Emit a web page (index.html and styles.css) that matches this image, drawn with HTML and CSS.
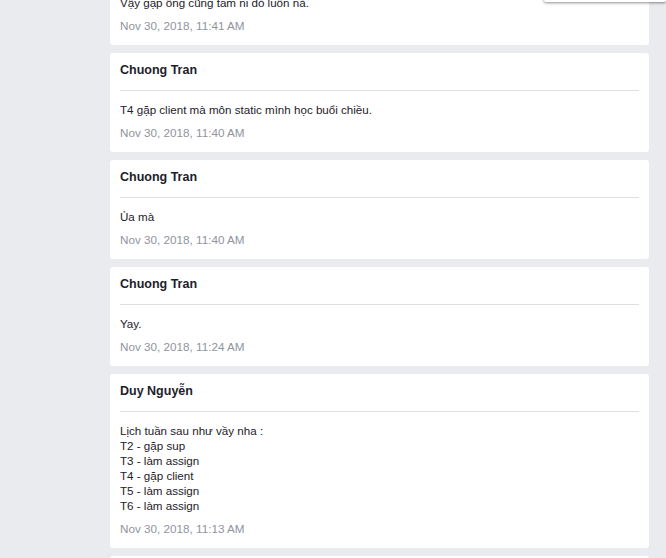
FILE: index.html
```html
<!DOCTYPE html>
<html lang="vi">
<head>
<meta charset="utf-8">
<title>Feed</title>
<link rel="stylesheet" href="styles.css">
</head>
<body>
<div class="feed">
  <div class="card first">
    <div class="card-head"><span class="name">Chuong Tran</span></div>
    <div class="card-body">
      <div class="msg">Vậy gặp ông cũng tầm ni đó luôn nà.</div>
      <div class="date">Nov 30, 2018, 11:41 AM</div>
    </div>
  </div>
  <div class="card">
    <div class="card-head"><span class="name">Chuong Tran</span></div>
    <div class="card-body">
      <div class="msg">T4 gặp client mà môn static mình học buổi chiều.</div>
      <div class="date">Nov 30, 2018, 11:40 AM</div>
    </div>
  </div>
  <div class="card">
    <div class="card-head"><span class="name">Chuong Tran</span></div>
    <div class="card-body">
      <div class="msg">Ủa mà</div>
      <div class="date">Nov 30, 2018, 11:40 AM</div>
    </div>
  </div>
  <div class="card">
    <div class="card-head"><span class="name">Chuong Tran</span></div>
    <div class="card-body">
      <div class="msg">Yay.</div>
      <div class="date">Nov 30, 2018, 11:24 AM</div>
    </div>
  </div>
  <div class="card">
    <div class="card-head"><span class="name">Duy Nguyễn</span></div>
    <div class="card-body">
      <div class="msg">Lịch tuần sau như vầy nha :<br>T2 - gặp sup<br>T3 - làm assign<br>T4 - gặp client<br>T5 - làm assign<br>T6 - làm assign</div>
      <div class="date">Nov 30, 2018, 11:13 AM</div>
    </div>
  </div>
  <div class="card last"></div>
</div>
<div class="popup"></div>
</body>
</html>
```
FILE: styles.css
```css
html, body {
  margin: 0;
  padding: 0;
  background: #e9ebee;
  font-family: "Liberation Sans", Arial, sans-serif;
  color: #1d2129;
  height: 558px;
  overflow: hidden;
}
.feed {
  display: flex;
  flex-direction: column;
  gap: 8px;
  width: 539px;
  margin-left: 110px;
}
.card {
  background: #fff;
  border-radius: 3px;
  padding: 0 10px;
  flex: none;
}
.card.first {
  margin-top: -54px;
}
.card.last {
  height: 40px;
}
.card-head {
  padding: 8px 0 12px;
  border-bottom: 1px solid #dddfe2;
  line-height: 16px;
}
.name {
  font-size: 12.5px;
  font-weight: bold;
  color: #1d2129;
}
.card-body {
  padding: 11px 0 11px;
}
.msg {
  font-size: 11.6px;
  line-height: 15px;
  color: #1d2129;
}
.date {
  margin-top: 8px;
  font-size: 11.7px;
  line-height: 16px;
  color: #90949c;
}
.popup {
  position: fixed;
  top: -40px;
  left: 544px;
  right: 0;
  height: 42px;
  background: #fff;
  border-radius: 0 0 2px 2px;
  box-shadow: 0 1px 3px rgba(0, 0, 0, 0.45);
}
```
